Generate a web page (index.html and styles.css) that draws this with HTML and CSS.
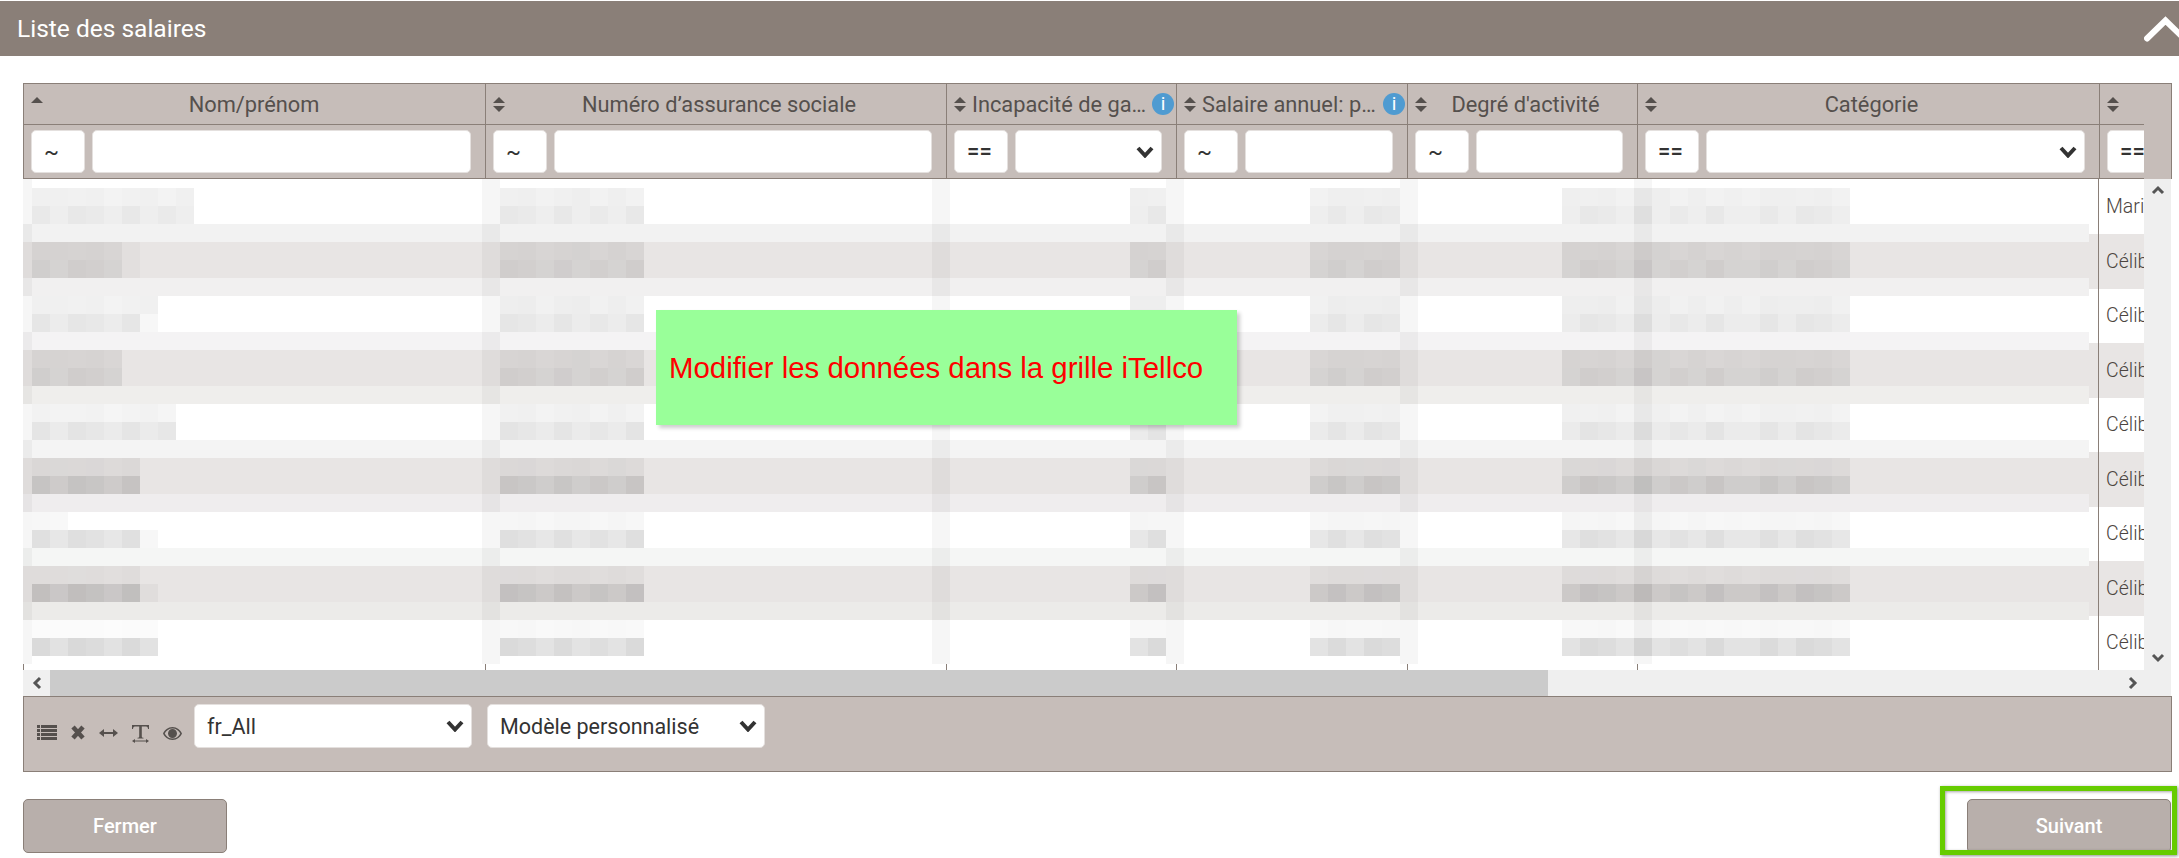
FILE: index.html
```html
<!DOCTYPE html>
<html lang="fr">
<head>
<meta charset="utf-8">
<title>Liste des salaires</title>
<link rel="stylesheet" href="styles.css">
</head>
<body>
<svg class="defs" width="0" height="0" aria-hidden="true">
  <defs>
    <g id="sort"><path d="M6 0 12 6H0Z"/><path d="M0 9H12L6 15Z"/></g>
    <g id="sort-up"><path d="M6 0 12 6H0Z"/></g>
  </defs>
</svg>
<header class="title-bar">
  <h1 class="title">Liste des salaires</h1>
  <svg class="collapse" width="42" height="30" viewBox="0 0 42 30"><path d="M3 26.500 21.500 8.500 40 26.500"/></svg>
</header>
<main class="panel">
  <section class="grid">
    <div class="head">
      <div class="th th-first"><svg class="sort sort-top" width="12" height="15" viewBox="0 0 12 15"><use href="#sort-up"/></svg><span class="th-label">Nom/prénom</span></div>
      <div class="th"><svg class="sort" width="12" height="15" viewBox="0 0 12 15"><use href="#sort"/></svg><span class="th-label">Numéro d’assurance sociale</span></div>
      <div class="th th-info"><svg class="sort" width="12" height="15" viewBox="0 0 12 15"><use href="#sort"/></svg><span class="th-label">Incapacité de gain (%)</span><span class="info">i</span></div>
      <div class="th th-info"><svg class="sort" width="12" height="15" viewBox="0 0 12 15"><use href="#sort"/></svg><span class="th-label">Salaire annuel: part</span><span class="info">i</span></div>
      <div class="th"><svg class="sort" width="12" height="15" viewBox="0 0 12 15"><use href="#sort"/></svg><span class="th-label">Degré d'activité</span></div>
      <div class="th"><svg class="sort" width="12" height="15" viewBox="0 0 12 15"><use href="#sort"/></svg><span class="th-label">Catégorie</span></div>
      <div class="th th-last"><svg class="sort" width="12" height="15" viewBox="0 0 12 15"><use href="#sort"/></svg></div>
      <div></div>

      <div class="fc"><button class="op">~</button><input class="field" type="text"></div>
      <div class="fc"><button class="op">~</button><input class="field" type="text"></div>
      <div class="fc"><button class="op op-eq">==</button><select class="field field-select"><option></option></select></div>
      <div class="fc"><button class="op">~</button><input class="field" type="text"></div>
      <div class="fc"><button class="op">~</button><input class="field" type="text"></div>
      <div class="fc"><button class="op op-eq">==</button><select class="field field-select"><option></option></select></div>
      <div class="fc fc-last"><button class="op op-eq">==</button></div>
      <div></div>
    </div>

    <div class="body">
      <svg class="mosaic" width="2066" height="491" viewBox="23 179 2066 491" role="img" aria-label="Données masquées">
        <defs>
          <pattern id="pa" patternUnits="userSpaceOnUse" x="14" y="188" width="216" height="18">
            <rect width="216" height="18" fill="#000" fill-opacity=".8"/>
            <rect x="18" width="18" height="18" fill="#000" fill-opacity=".95"/>
            <rect x="36" width="18" height="18" fill="#000" fill-opacity=".88"/>
            <rect x="54" width="18" height="18" fill="#000" fill-opacity=".62"/>
            <rect x="72" width="18" height="18" fill="#000" fill-opacity=".92"/>
            <rect x="108" width="18" height="18" fill="#000" fill-opacity=".66"/>
            <rect x="126" width="18" height="18" fill="#000" fill-opacity="1"/>
            <rect x="162" width="18" height="18" fill="#000" fill-opacity=".88"/>
            <rect x="198" width="18" height="18" fill="#000" fill-opacity=".64"/>
          </pattern>
          <pattern id="pb" patternUnits="userSpaceOnUse" x="14" y="188" width="216" height="18">
            <rect width="216" height="18" fill="#000" fill-opacity=".76"/>
            <rect x="18" width="18" height="18" fill="#000" fill-opacity=".88"/>
            <rect x="54" width="18" height="18" fill="#000" fill-opacity="1"/>
            <rect x="72" width="18" height="18" fill="#000" fill-opacity=".62"/>
            <rect x="108" width="18" height="18" fill="#000" fill-opacity=".92"/>
            <rect x="144" width="18" height="18" fill="#000" fill-opacity=".6"/>
            <rect x="180" width="18" height="18" fill="#000" fill-opacity="1"/>
          </pattern>
          <g id="la" fill="url(#pa)">
            <rect x="500" y="188" width="144" height="18"/>
            <rect x="1130" y="188" width="36" height="18"/>
            <rect x="1310" y="188" width="90" height="18"/>
            <rect x="1562" y="188" width="288" height="18"/>
          </g>
          <g id="lb" fill="url(#pb)">
            <rect x="500" y="206" width="144" height="18"/>
            <rect x="1130" y="206" width="36" height="18"/>
            <rect x="1310" y="206" width="90" height="18"/>
            <rect x="1562" y="206" width="288" height="18"/>
          </g>
        </defs>
        <rect x="23" y="179" width="2066" height="491" fill="#fff"/>
        <g fill="#e8e5e4">
          <rect x="23" y="242" width="2066" height="36"/>
          <rect x="23" y="350" width="2066" height="36"/>
          <rect x="23" y="458" width="2066" height="36"/>
          <rect x="23" y="566" width="2066" height="36"/>
        </g>
        <rect x="23" y="224" width="2066" height="18" fill="#f2f2f2"/>
        <rect x="23" y="278" width="2066" height="18" fill="#f1f0f0"/>
        <rect x="23" y="332" width="2066" height="18" fill="#f4f3f4"/>
        <rect x="23" y="386" width="2066" height="18" fill="#efeeec"/>
        <rect x="23" y="440" width="2066" height="18" fill="#f4f4f4"/>
        <rect x="23" y="494" width="2066" height="18" fill="#efedee"/>
        <rect x="23" y="548" width="2066" height="18" fill="#f5f6f5"/>
        <rect x="23" y="602" width="2066" height="18" fill="#ecebe9"/>

        <use href="#la" opacity=".065"/><use href="#lb" opacity=".09"/>
        <use href="#la" y="54" opacity=".085"/><use href="#lb" y="54" opacity=".105"/>
        <use href="#la" y="108" opacity=".07"/><use href="#lb" y="108" opacity=".1"/>
        <use href="#la" y="162" opacity=".08"/><use href="#lb" y="162" opacity=".105"/>
        <use href="#la" y="216" opacity=".06"/><use href="#lb" y="216" opacity=".105"/>
        <use href="#la" y="270" opacity=".06"/><use href="#lb" y="270" opacity=".14"/>
        <use href="#la" y="324" opacity=".04"/><use href="#lb" y="324" opacity=".125"/>
        <use href="#la" y="378" opacity=".045"/><use href="#lb" y="378" opacity=".16"/>
        <use href="#la" y="432" opacity=".03"/><use href="#lb" y="432" opacity=".145"/>

        <rect x="32" y="188" width="162" height="18" fill="url(#pa)" opacity=".06"/>
        <rect x="32" y="206" width="162" height="18" fill="url(#pb)" opacity=".09"/>
        <rect x="32" y="242" width="90" height="18" fill="url(#pa)" opacity=".085"/>
        <rect x="32" y="260" width="90" height="18" fill="url(#pb)" opacity=".105"/>
        <rect x="122" y="242" width="18" height="36" fill="#000" fill-opacity=".025"/>
        <rect x="32" y="296" width="126" height="18" fill="url(#pa)" opacity=".06"/>
        <rect x="32" y="314" width="108" height="18" fill="url(#pb)" opacity=".1"/>
        <rect x="140" y="314" width="18" height="18" fill="#000" fill-opacity=".03"/>
        <rect x="32" y="350" width="90" height="18" fill="url(#pa)" opacity=".08"/>
        <rect x="32" y="368" width="90" height="18" fill="url(#pb)" opacity=".105"/>
        <rect x="32" y="404" width="144" height="18" fill="url(#pa)" opacity=".05"/>
        <rect x="32" y="422" width="144" height="18" fill="url(#pb)" opacity=".105"/>
        <rect x="32" y="458" width="108" height="18" fill="url(#pa)" opacity=".06"/>
        <rect x="32" y="476" width="108" height="18" fill="url(#pb)" opacity=".15"/>
        <rect x="32" y="512" width="36" height="18" fill="url(#pa)" opacity=".03"/>
        <rect x="32" y="530" width="108" height="18" fill="url(#pb)" opacity=".125"/>
        <rect x="140" y="530" width="18" height="18" fill="#000" fill-opacity=".03"/>
        <rect x="32" y="566" width="108" height="18" fill="url(#pa)" opacity=".04"/>
        <rect x="32" y="584" width="108" height="18" fill="url(#pb)" opacity=".17"/>
        <rect x="140" y="584" width="18" height="18" fill="#000" fill-opacity=".03"/>
        <rect x="32" y="620" width="126" height="18" fill="url(#pa)" opacity=".015"/>
        <rect x="32" y="638" width="126" height="18" fill="url(#pb)" opacity=".15"/>

        <g fill="#000" fill-opacity=".035">
          <rect x="23" y="179" width="9" height="485"/>
          <rect x="482" y="179" width="18" height="485"/>
          <rect x="932" y="179" width="18" height="485"/>
          <rect x="1166" y="179" width="18" height="485"/>
          <rect x="1400" y="179" width="18" height="485"/>
          <rect x="1634" y="179" width="18" height="485"/>
        </g>
        <g fill="#8a7f78">
          <rect x="23" y="664" width="1" height="6"/>
          <rect x="485" y="664" width="1" height="6"/>
          <rect x="946" y="664" width="1" height="6"/>
          <rect x="1176" y="664" width="1" height="6"/>
          <rect x="1407" y="664" width="1" height="6"/>
          <rect x="1637" y="664" width="1" height="6"/>
        </g>
      </svg>

      <div class="last-col">
        <div class="row row-first"><div class="cell">Marié</div></div>
        <div class="row row-alt"><div class="cell">Célibataire</div></div>
        <div class="row"><div class="cell">Célibataire</div></div>
        <div class="row row-alt"><div class="cell">Célibataire</div></div>
        <div class="row"><div class="cell">Célibataire</div></div>
        <div class="row row-alt"><div class="cell">Célibataire</div></div>
        <div class="row"><div class="cell">Célibataire</div></div>
        <div class="row row-alt"><div class="cell">Célibataire</div></div>
        <div class="row"><div class="cell">Célibataire</div></div>
      </div>

      <div class="vscroll">
        <svg class="sb-icon" width="14" height="10" viewBox="0 0 14 10"><path d="M2 8 7 3 12 8"/></svg>
        <svg class="sb-icon" width="14" height="10" viewBox="0 0 14 10"><path d="M2 2 7 7 12 2"/></svg>
      </div>

      <div class="note">Modifier les données dans la grille iTellco</div>
    </div>

    <div class="hscroll">
      <div class="hs-btn"><svg class="sb-icon" width="10" height="14" viewBox="0 0 10 14"><path d="M8 2 3 7 8 12"/></svg></div>
      <div class="hs-thumb"></div>
      <div class="hs-track"><svg class="sb-icon" width="10" height="14" viewBox="0 0 10 14"><path d="M2 2 7 7 2 12"/></svg></div>
    </div>

    <div class="toolbar">
      <div class="tools">
        <svg class="tool" width="20" height="18" viewBox="0 0 20 18"><path d="M0 0H3V3H0ZM4 0H20V3H4ZM0 4H3V7H0ZM4 4H20V7H4ZM0 8H3V11H0ZM4 8H20V11H4ZM0 12H3V15H0ZM4 12H20V15H4Z"/></svg>
        <svg class="tool" width="14" height="18" viewBox="0 0 14 18"><path d="M2 2 12 13M12 2 2 13" class="tool-x"/></svg>
        <svg class="tool" width="19" height="18" viewBox="0 0 19 18"><path d="M0 8 5 4V7H14V4L19 8 14 12V9H5V12Z"/></svg>
        <svg class="tool" width="17" height="18" viewBox="0 0 17 18"><path d="M0 0H17V4H16C16 2 15 1.500 13 1.500H9.800V11.500C9.800 12.500 10.500 12.800 11.500 12.800V13.500H5.500V12.800C6.500 12.800 7.200 12.500 7.200 11.500V1.500H4C2 1.500 1 2 1 4H0ZM0 16 3 14V15.500H14V14L17 16 14 18V16.500H3V18Z"/></svg>
        <svg class="tool" width="19" height="18" viewBox="0 0 19 18"><path fill-rule="evenodd" d="M9.500 2C14 2 17.500 5 19 8.500 17.500 12 14 15 9.500 15S1.500 12 0 8.500C1.500 5 5 2 9.500 2ZM9.500 3.500C6 3.500 3.200 5.500 1.700 8.500 3.200 11.500 6 13.500 9.500 13.500S15.800 11.500 17.300 8.500C15.800 5.500 13 3.500 9.500 3.500ZM9.500 4C12 4 14 6 14 8.500S12 13 9.500 13 5 11 5 8.500 7 4 9.500 4Z"/></svg>
      </div>
      <select class="tb-select"><option>fr_All</option></select>
      <select class="tb-select"><option>Modèle personnalisé</option></select>
    </div>
  </section>

  <footer class="actions">
    <button class="btn">Fermer</button>
    <div class="next-wrap">
      <button class="btn">Suivant</button>
      <div class="highlight"></div>
    </div>
  </footer>
</main>
</body>
</html>
```
FILE: styles.css
```css
html, body {
  margin: 0;
  padding: 0;
  overflow: hidden;
  background: #fff;
}
body {
  height: 858px;
  padding-top: 1px;
  box-sizing: border-box;
  font-family: Roboto, "Liberation Sans", sans-serif;
  color: #55504d;
}
.defs { position: absolute; }

.title-bar {
  display: flex;
  align-items: center;
  justify-content: space-between;
  height: 55px;
  padding-left: 17px;
  background: #8a7f78;
  overflow: hidden;
}
.title {
  margin: 0;
  font-size: 24.500px;
  font-weight: 400;
  color: #fff;
}
.collapse {
  flex: none;
  margin-right: -7px;
  margin-top: -4px;
}
.collapse path {
  fill: none;
  stroke: #fff;
  stroke-width: 6;
  stroke-linecap: round;
  stroke-linejoin: miter;
}

.panel { padding: 27px 7px 0 23px; }

.head {
  display: grid;
  grid-template-columns: 462px 461px 230px 231px 230px 462px 44px 27px;
  grid-template-rows: 41px 54px;
  border: 1px solid #8a7f78;
  border-bottom: 0;
  background: #c6bdb9;
}
.th {
  display: flex;
  align-items: center;
  box-sizing: border-box;
  padding: 0 13px 0 7px;
  border-right: 1px solid #8a7f78;
  border-bottom: 1px solid #8a7f78;
  font-size: 21.800px;
  color: #55504d;
  min-width: 0;
}
.th-first { padding-right: 20px; }
.th-last { border-right: 0; }
.sort { flex: none; fill: #55504d; }
.sort-top { align-self: flex-start; margin-top: 13px; }
.th-label {
  flex: 1;
  min-width: 0;
  text-align: center;
  white-space: nowrap;
  overflow: hidden;
  text-overflow: ellipsis;
}
.th-info { padding-right: 2px; }
.th-info .th-label { margin-left: 6px; text-align: left; }
.info {
  flex: none;
  width: 22px;
  height: 22px;
  margin-left: 2px;
  border-radius: 50%;
  background: #4f9bd1;
  color: #fff;
  font-size: 19px;
  line-height: 22px;
  text-align: center;
}

.fc {
  display: flex;
  gap: 7px;
  box-sizing: border-box;
  padding: 5px 14px 5px 7px;
  border-right: 1px solid #8a7f78;
  border-bottom: 1px solid #8a7f78;
  min-width: 0;
}
.fc-last {
  padding-right: 0;
  border-right: 0;
  overflow: hidden;
}
.op {
  flex: none;
  width: 54px;
  height: 43px;
  padding: 0 0 0 12px;
  box-sizing: border-box;
  border: 1px solid #e4e0de;
  border-radius: 5px;
  background: #fff;
  color: #333;
  font: 22px Roboto, sans-serif;
  text-align: left;
}
.op-eq { font-weight: 500; }
.field {
  flex: 1;
  min-width: 0;
  height: 43px;
  box-sizing: border-box;
  border: 1px solid #e4e0de;
  border-radius: 5px;
  background: #fff;
  outline: 0;
}
.field-select,
.tb-select {
  appearance: none;
  background-image: url("data:image/svg+xml,%3Csvg xmlns='http://www.w3.org/2000/svg' width='18' height='12' viewBox='0 0 18 12'%3E%3Cpath d='M2 2 9 9.500 16 2' fill='none' stroke='%23333' stroke-width='4'/%3E%3C/svg%3E");
  background-repeat: no-repeat;
  background-position: right 7px center;
  background-size: 18px 12px;
}

.body {
  position: relative;
  display: flex;
  height: 491px;
  width: 2148px;
}
.mosaic { display: block; flex: none; }
.last-col { flex: none; width: 55px; }
.row {
  height: 54.5px;
  padding-left: 9px;
  box-sizing: border-box;
  background: #fff;
}
.row-first { height: 55px; }
.row-alt { background: #e8e5e4; }
.cell {
  height: 100%;
  display: flex;
  align-items: center;
  padding-left: 7px;
  border-left: 1px solid #8a7f78;
  overflow: hidden;
  white-space: nowrap;
  font-size: 19.500px;
  font-weight: 300;
  color: #4c4541;
}
.vscroll {
  flex: none;
  width: 27px;
  display: flex;
  flex-direction: column;
  align-items: center;
  justify-content: space-between;
  padding: 6px 0 7px;
  box-sizing: border-box;
  background: #efefef;
}
.sb-icon path {
  fill: none;
  stroke: #555;
  stroke-width: 3;
}
.note {
  position: absolute;
  left: 633px;
  top: 131px;
  width: 581px;
  height: 115px;
  box-sizing: border-box;
  display: flex;
  align-items: center;
  padding-left: 13px;
  background: #99ff99;
  box-shadow: 3px 3px 4px rgba(0, 0, 0, .2);
  font-family: "Liberation Sans", Arial, sans-serif;
  font-size: 29.400px;
  color: #f00;
  white-space: nowrap;
}

.hscroll {
  display: flex;
  height: 26px;
  width: 2148px;
}
.hs-btn {
  flex: none;
  width: 27px;
  display: flex;
  align-items: center;
  justify-content: center;
  background: #f0f0f0;
}
.hs-thumb {
  flex: none;
  width: 1498px;
  background: #cbcbcb;
}
.hs-track {
  flex: 1;
  display: flex;
  align-items: center;
  justify-content: flex-end;
  padding-right: 33px;
  background: #efefef;
}

.toolbar {
  display: flex;
  align-items: flex-start;
  height: 76px;
  width: 2149px;
  box-sizing: border-box;
  padding: 7px 0 0 13px;
  border: 1px solid #8a7f78;
  background: #c6bdb9;
}
.tools {
  display: flex;
  gap: 14px;
  margin-top: 21px;
  margin-right: 12px;
}
.tool { flex: none; fill: #55504d; }
.tool-x {
  fill: none;
  stroke: #55504d;
  stroke-width: 4.500;
}
.tb-select {
  flex: none;
  width: 278px;
  height: 44px;
  margin-right: 15px;
  padding-left: 12px;
  box-sizing: border-box;
  border: 1px solid #e4e0de;
  border-radius: 5px;
  background-color: #fff;
  outline: 0;
  font: 21.500px Roboto, sans-serif;
  color: #333;
}

.actions {
  display: flex;
  justify-content: space-between;
  margin-top: 27px;
  width: 2148px;
}
.next-wrap { position: relative; }
.btn {
  display: block;
  width: 204px;
  height: 54px;
  border: 1px solid #8a7f78;
  border-radius: 5px;
  background: #b8afab;
  color: #fff;
  font: 500 20px Roboto, sans-serif;
}
.highlight {
  position: absolute;
  left: -27px;
  top: -13px;
  right: -6px;
  bottom: -2px;
  border: 5.500px solid #66cc00;
  box-shadow: 1px 1px 3px rgba(0, 0, 0, .45), inset 1px 1px 3px rgba(0, 0, 0, .35);
}
```
